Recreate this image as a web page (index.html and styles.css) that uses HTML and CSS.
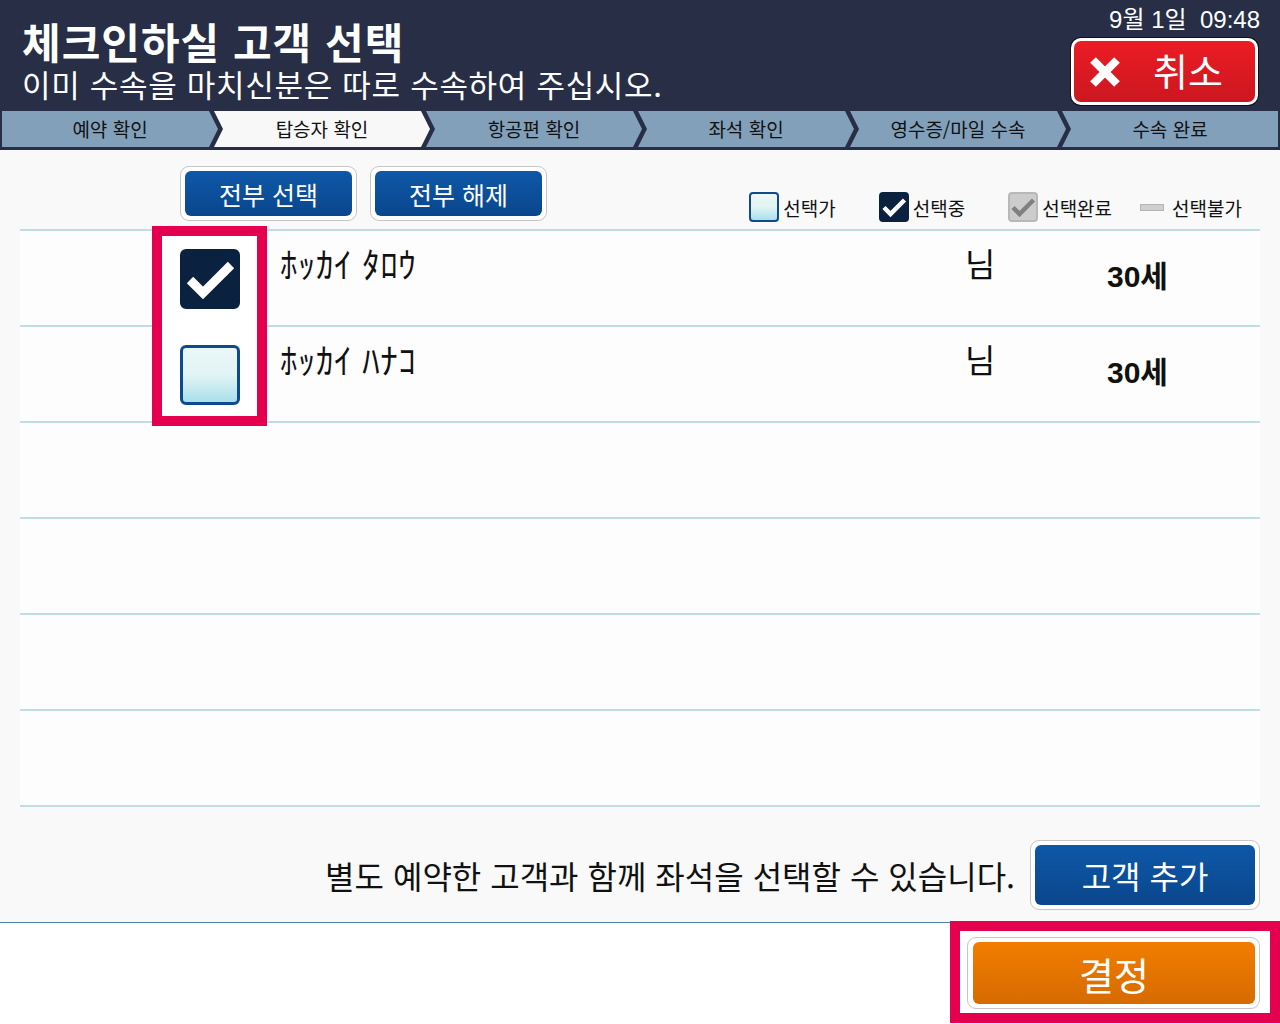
FILE: index.html
```html
<!DOCTYPE html>
<html lang="ko">
<head>
<meta charset="UTF-8">
<title>체크인하실 고객 선택</title>
<link rel="stylesheet" href="styles.css">
</head>
<body>

	<!-- 상단 헤더 -->
	<header class="top">
		<div class="top-main">
			<div class="titles">
				<h1 class="title">체크인하실 고객 선택</h1>
				<p class="subtitle">이미 수속을 마치신분은 따로 수속하여 주십시오.</p>
			</div>
			<div class="top-side">
				<div class="clock">9월 1일&nbsp; 09:48</div>
				<button class="cancel">
					<svg class="cancel-x" width="30" height="30" viewBox="0 0 30 30">
						<path d="M3 3 L27 27 M27 3 L3 27" stroke="#fff" stroke-width="8" fill="none"/>
					</svg>
					<span>취소</span>
				</button>
			</div>
		</div>
		<ol class="steps">
			<li class="step first">예약 확인</li>
			<li class="step active">탑승자 확인</li>
			<li class="step">항공편 확인</li>
			<li class="step">좌석 확인</li>
			<li class="step">영수증/마일 수속</li>
			<li class="step">수속 완료</li>
		</ol>
	</header>

	<main class="content">
		<div class="toolbar">
			<div class="frame"><button class="btn blue wide">전부 선택</button></div>
			<div class="frame"><button class="btn blue wide">전부 해제</button></div>

			<ul class="legend">
				<li><span class="mini box"></span>선택가</li>
				<li><span class="mini box on">
					<svg width="30" height="30" viewBox="0 0 60 60"><polyline points="10,31 23,44 51,16" stroke="#fff" stroke-width="9" fill="none"/></svg>
				</span>선택중</li>
				<li><span class="mini box done">
					<svg width="30" height="30" viewBox="0 0 60 60"><polyline points="10,31 23,44 51,16" stroke="#808080" stroke-width="9" fill="none"/></svg>
				</span>선택완료</li>
				<li><span class="dash"></span>선택불가</li>
			</ul>
		</div>

		<!-- 승객 목록 -->
		<div class="list">
			<div class="mark"></div>

			<div class="row">
				<span class="check on">
					<svg width="60" height="60" viewBox="0 0 60 60"><polyline points="10,31 23,44 51,16" stroke="#fff" stroke-width="9" fill="none"/></svg>
				</span>
				<span class="name">ﾎｯｶｲ ﾀﾛｳ</span>
				<span class="honor">님</span>
				<span class="age">30세</span>
			</div>
			<div class="row">
				<span class="check"></span>
				<span class="name">ﾎｯｶｲ ﾊﾅｺ</span>
				<span class="honor">님</span>
				<span class="age">30세</span>
			</div>
			<div class="row"></div>
			<div class="row"></div>
			<div class="row"></div>
			<div class="row"></div>
		</div>

		<div class="note">
			<p>별도 예약한 고객과 함께 좌석을 선택할 수 있습니다.</p>
			<div class="frame"><button class="btn blue add">고객 추가</button></div>
		</div>
	</main>

	<footer class="bottom">
		<div class="mark-ok"></div>
		<div class="frame ok-frame"><button class="btn orange ok">결정</button></div>
	</footer>

</body>
</html>
```

FILE: styles.css
```css
html, body {
	margin: 0;
	padding: 0;
	width: 1280px;
	height: 1024px;
	overflow: hidden;
	background: #fff;
	font-family: "Noto Sans CJK KR", "Liberation Sans", sans-serif;
	color: #111;
}

button {
	font-family: inherit;
	cursor: pointer;
}

/* header */
.top {
	background: #282e45;
	color: #fff;
}

.top-main {
	display: flex;
	justify-content: space-between;
	height: 110px;
}

.titles {
	padding: 19px 0 0 22px;
}

.title {
	margin: 0;
	font-size: 42px;
	line-height: 44px;
	font-weight: bold;
	letter-spacing: 1px;
}

.subtitle {
	margin: 4px 0 0;
	font-size: 31px;
	line-height: 34px;
	letter-spacing: 0.7px;
}

.top-side {
	display: flex;
	flex-direction: column;
	align-items: flex-end;
	padding: 6px 20px 0 0;
}

.clock {
	font-family: "Liberation Sans", "Noto Sans CJK KR", sans-serif;
	font-size: 24px;
	line-height: 28px;
	white-space: pre;
}

.cancel {
	margin: 4px 2px 0 0;
	width: 187px;
	height: 67px;
	border: 3px solid #fff;
	border-radius: 10px;
	background: linear-gradient(#ec1c24, #cb1720);
	color: #fff;
	display: flex;
	align-items: center;
	gap: 33px;
	padding: 0 0 0 16px;
	font-size: 38px;
	box-shadow: 0 0 0 1px #111;
}

.cancel span {
	line-height: 1;
	margin-top: -4px;
}

/* steps */
.steps {
	list-style: none;
	margin: 0;
	padding: 1px 2px 3px;
	display: flex;
}

.step {
	flex: 1;
	height: 36px;
	line-height: 36px;
	text-align: center;
	font-size: 19px;
	color: #111;
	background: #82a0ba;
	margin-left: -4px;
	clip-path: polygon(0 0, calc(100% - 9px) 0, 100% 50%, calc(100% - 9px) 100%, 0 100%, 9px 50%);
}

.step.first {
	margin-left: 0;
	clip-path: polygon(0 0, calc(100% - 9px) 0, 100% 50%, calc(100% - 9px) 100%, 0 100%);
}

.step:last-child {
	clip-path: polygon(0 0, 100% 0, 100% 100%, 0 100%, 9px 50%);
}

.step.active {
	background: #f8f8f8;
}

/* main */
.content {
	background: #f9f9f9;
	padding: 16px 20px 12px;
	border-bottom: 1px solid #4a80b0;
}

.toolbar {
	display: flex;
	align-items: flex-end;
	gap: 13px;
	padding-left: 160px;
}

.frame {
	border: 1px solid #c6c6c6;
	border-radius: 9px;
	background: #fff;
	padding: 4px;
}

.btn {
	border: none;
	border-radius: 6px;
	color: #fff;
	display: block;
}

.btn.blue {
	background: linear-gradient(#0e58a8, #0a468c);
}

.btn.wide {
	width: 167px;
	height: 45px;
	font-size: 25px;
	padding: 0;
}

.legend {
	list-style: none;
	margin: 0 18px -1px auto;
	padding: 0;
	display: flex;
	align-items: center;
	font-size: 19px;
	height: 30px;
}

.legend li {
	display: flex;
	align-items: center;
	gap: 4px;
	margin-left: 43px;
}

.legend li:last-child {
	margin-left: 28px;
	gap: 8px;
}

.box {
	box-sizing: border-box;
	display: inline-block;
	border: 2px solid #0e4b8e;
	border-radius: 4px;
	background: linear-gradient(#eaf7f6 0%, #e2f4f4 50%, #a8e0ea 100%);
}

.mini {
	width: 30px;
	height: 30px;
}

.mini svg {
	display: block;
	margin: -2px;
}

.box.on {
	background: #0a2140;
	border-color: #0a2140;
}

.box.done {
	background: #cccccc;
	border-color: #b8b8b8;
}

.dash {
	display: inline-block;
	width: 24px;
	height: 7px;
	box-sizing: border-box;
	background: #cfcfcf;
	border: 1px solid #b4b4b4;
}

/* list */
.list {
	position: relative;
	margin-top: 8px;
	border-bottom: 2px solid #c2dce6;
}

.row {
	height: 94px;
	border-top: 2px solid #c2dce6;
	background: #fdfdfd;
	display: flex;
	align-items: flex-start;
	padding-left: 160px;
}

.mark {
	position: absolute;
	left: 132px;
	top: -3px;
	width: 95px;
	height: 180px;
	border: 10px solid #e4004f;
	background: #fff;
	z-index: 1;
}

.check {
	position: relative;
	z-index: 2;
	box-sizing: border-box;
	width: 60px;
	height: 60px;
	margin-top: 18px;
	border: 3px solid #0e4b8e;
	border-radius: 6px;
	background: linear-gradient(#eaf7f6 0%, #e2f4f4 50%, #a8e0ea 100%);
}

.check.on {
	background: #0a2140;
	border-color: #0a2140;
}

.check svg {
	display: block;
	margin: -3px;
}

.name {
	font-family: "Noto Sans CJK JP", sans-serif;
	font-size: 35px;
	line-height: 40px;
	margin: 12px 0 0 40px;
	width: 685px;
	letter-spacing: 0.5px;
}

.honor {
	font-size: 33px;
	line-height: 40px;
	margin-top: 12px;
	width: 142px;
}

.age {
	font-family: "Liberation Sans", "Noto Sans CJK KR", sans-serif;
	font-weight: bold;
	font-size: 30px;
	line-height: 40px;
	margin-top: 26px;
}

/* note */
.note {
	display: flex;
	justify-content: flex-end;
	align-items: center;
	gap: 15px;
	margin-top: 33px;
}

.note p {
	margin: 0;
	font-size: 32px;
}

.btn.add {
	width: 220px;
	height: 60px;
	font-size: 32px;
	padding: 0;
}

/* bottom */
.bottom {
	position: relative;
	height: 100px;
	display: flex;
	justify-content: flex-end;
	align-items: flex-start;
	padding: 14px 20px 0 0;
}

.mark-ok {
	position: absolute;
	left: 950px;
	top: -2px;
	width: 310px;
	height: 82px;
	border: 10px solid #e4004f;
	background: #fff;
}

.ok-frame {
	position: relative;
	padding: 4px 4px 4px 5px;
}

.btn.orange {
	background: linear-gradient(#f27d00, #d66b00);
}

.btn.ok {
	width: 282px;
	height: 62px;
	font-size: 38px;
	padding: 0;
}
```
